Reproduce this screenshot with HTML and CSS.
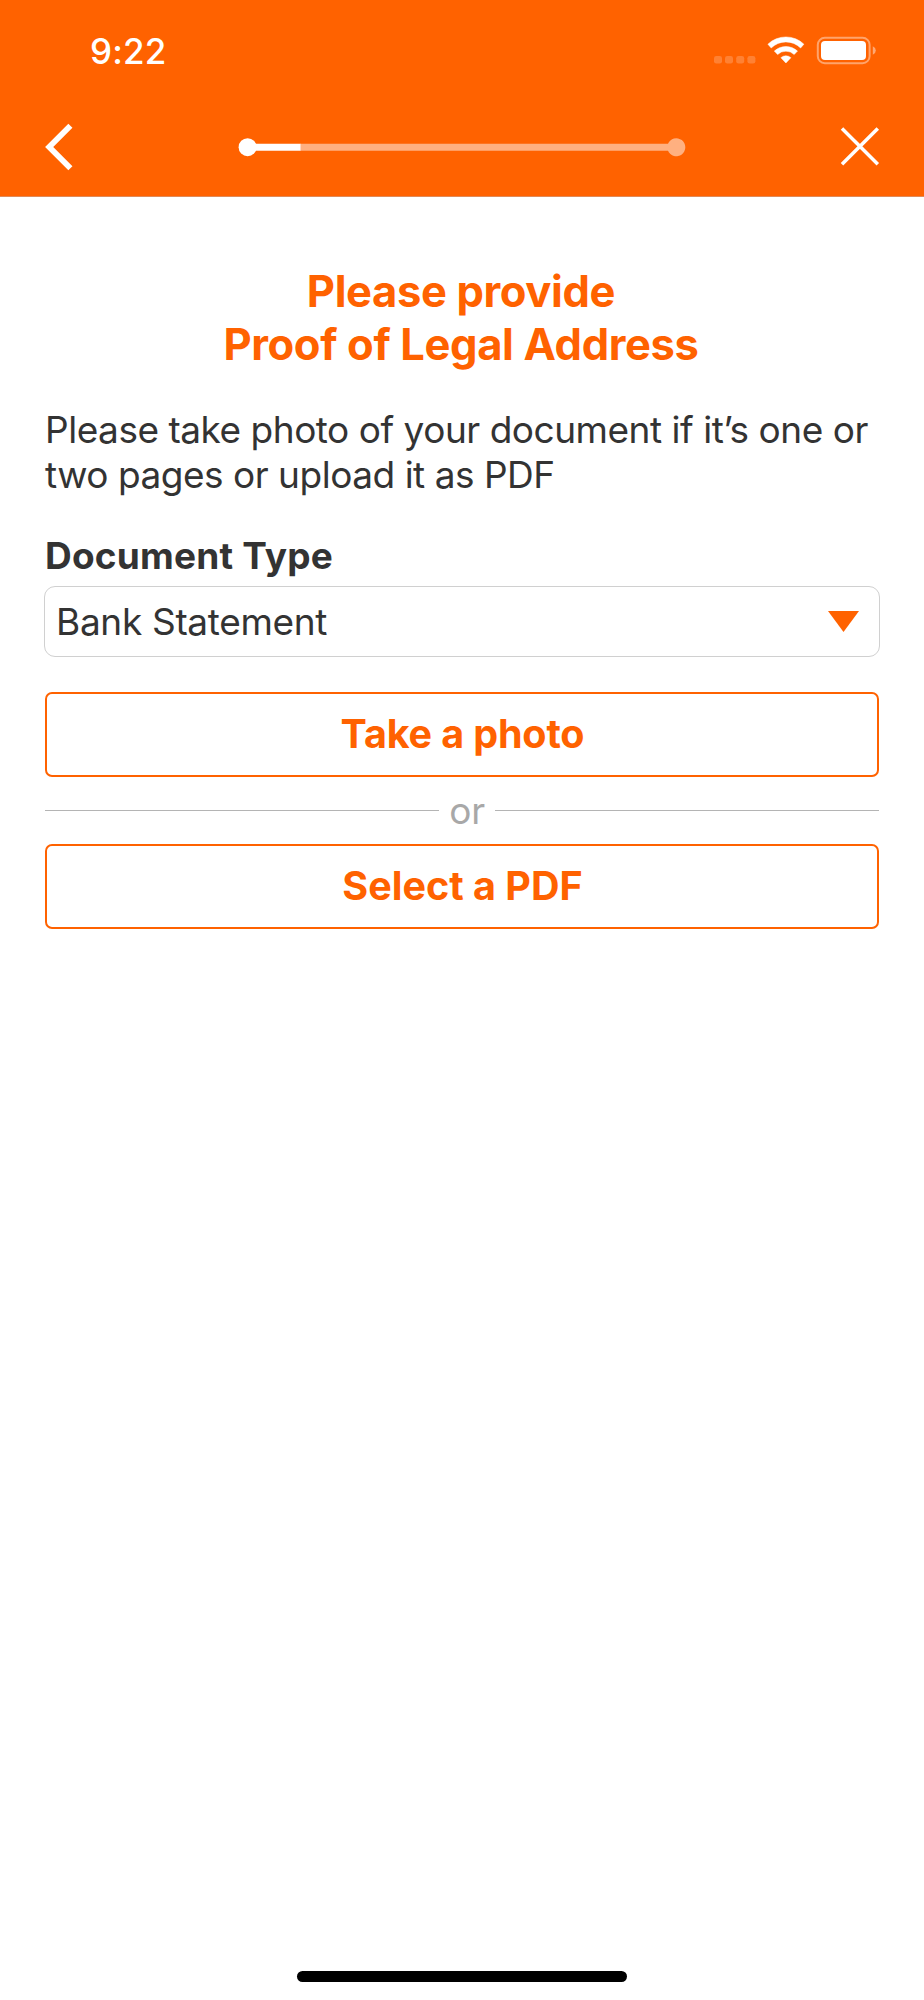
FILE: index.html
```html
<!DOCTYPE html>
<html lang="en">
<head>
<meta charset="utf-8">
<title>Proof of Legal Address</title>
<link rel="stylesheet" href="styles.css">
</head>
<body>
<div class="screen">
  <header class="header">
    <div class="status-bar">
      <span class="clock">9:22</span>
      <svg class="status-icons" width="164" height="30" viewBox="0 0 164 30">
        <g fill="#fff" fill-opacity=".2">
          <rect x="0" y="21" width="8" height="7.5" rx="2.3"/>
          <rect x="11" y="21" width="8" height="7.5" rx="2.3"/>
          <rect x="22.2" y="21" width="8" height="7.5" rx="2.3"/>
          <rect x="33.4" y="21" width="8" height="7.5" rx="2.3"/>
        </g>
        <g fill="#fff" stroke="#fff" stroke-width=".5" stroke-linejoin="round">
          <path d="M53.9 9.2A26 26 0 0 1 89.9 9.2L86.6 13A20.8 20.8 0 0 0 57.2 13Z"/>
          <path d="M60.3 16A17 17 0 0 1 83.5 16L80.2 19.5A12 12 0 0 0 63.6 19.5Z"/>
          <path d="M66.9 22.7A7.6 7.6 0 0 1 76.9 22.7L71.9 28Z"/>
        </g>
        <rect x="103.8" y="2.8" width="51.8" height="25.4" rx="7" fill="none" stroke="#fff" stroke-opacity=".42" stroke-width="2"/>
        <rect x="107" y="6" width="45" height="19.1" rx="4" fill="#fff"/>
        <path d="M158.8 11.2Q161.8 12.6 161.8 15.4T158.8 19.8Z" fill="#fff" fill-opacity=".45"/>
      </svg>
    </div>
    <nav class="nav-bar">
      <svg class="back" width="30" height="48" viewBox="0 0 30 48"><path d="M25.4 2.8 4.2 24 25.4 45.2" fill="none" stroke="#fff" stroke-width="5.8"/></svg>
      <svg class="progress" width="448" height="20" viewBox="0 0 448 20">
        <path d="M62 6.8H430A9 9 0 1 1 430 13.7H62Z" fill="#ffb080"/>
        <path d="M10 6.8H62.5V13.7H10Z" fill="#fff"/>
        <circle cx="9.6" cy="10.2" r="9" fill="#fff"/>
      </svg>
      <svg class="close" width="40" height="40" viewBox="0 0 40 40"><path d="M2 1.5 37.8 37.3M37.8 1.5 2 37.3" fill="none" stroke="#fff" stroke-width="3.5"/></svg>
    </nav>
  </header>
  <main class="content">
    <h1 class="title">Please provide<br>Proof of Legal Address</h1>
    <p class="intro">Please take photo of your document if it’s one or two pages or upload it as PDF</p>
    <div class="label">Document Type</div>
    <div class="select"><span class="select-value">Bank Statement</span><svg width="31" height="21" viewBox="0 0 31 21"><path d="M0 0H31L15.5 21Z" fill="#ff6200"/></svg></div>
    <button class="button button-photo">Take a photo</button>
    <div class="divider">or</div>
    <button class="button">Select a PDF</button>
  </main>
  <div class="home-indicator"></div>
</div>
</body>
</html>
```
FILE: styles.css
```css
* {
  box-sizing: border-box;
}

body {
  margin: 0;
  background: #fff;
  color: #333;
  font-family: Inter, "Liberation Sans", sans-serif;
}

.screen {
  display: flex;
  flex-direction: column;
  height: 2000px;
}

.header {
  height: 197px;
  background: #ff6200;
  border-bottom: 1px solid #e08a58;
}

.status-bar {
  display: flex;
  justify-content: space-between;
  align-items: flex-start;
  height: 96px;
  padding: 29px 46px 0 90px;
}

.clock {
  color: #fff;
  font-size: 35px;
  line-height: 44px;
  font-weight: 550;
  letter-spacing: 0.2px;
}

.status-icons {
  margin-top: 6px;
}

.nav-bar {
  display: flex;
  align-items: center;
  height: 102px;
  padding: 0 44px 0 45px;
}

.progress {
  margin-left: 163px;
}

.close {
  margin-left: auto;
}

.content {
  flex: 1;
  padding: 68px 45px 0;
}

.title {
  margin: 0;
  padding-right: 2px;
  color: #ff6200;
  font-size: 43.5px;
  line-height: 52.5px;
  font-weight: 700;
  letter-spacing: -0.36px;
  text-align: center;
}

.intro {
  margin: 37px 0 0;
  font-size: 37px;
  line-height: 45px;
  letter-spacing: -0.48px;
}

.label {
  margin-top: 36px;
  font-size: 37px;
  line-height: 46px;
  font-weight: 700;
  letter-spacing: 0.2px;
}

.select {
  display: flex;
  align-items: center;
  justify-content: space-between;
  height: 71px;
  margin: 7px -1px 0;
  padding: 0 20px 0 11px;
  border: 1px solid #d0d0d0;
  border-radius: 11px;
  font-size: 37px;
  letter-spacing: -0.32px;
}

.button {
  display: block;
  width: 100%;
  height: 85px;
  margin-top: 35px;
  padding: 0 0 2px 1px;
  border: 2px solid #ff6200;
  border-radius: 7px;
  background: #fff;
  color: #ff6200;
  font: 700 39.5px/48px Inter, "Liberation Sans", sans-serif;
}

.button-photo {
  letter-spacing: -0.15px;
}

.divider {
  display: flex;
  align-items: center;
  gap: 10px;
  height: 67px;
  color: #a8a8a8;
  font-size: 37px;
  letter-spacing: -0.4px;
}

.divider::before,
.divider::after {
  content: "";
  flex: 394;
  height: 1px;
  background: #b4b4b4;
}

.divider::after {
  flex: 384;
}

.divider + .button {
  margin-top: 0;
}

.home-indicator {
  width: 330px;
  height: 11px;
  margin: 0 auto 18px;
  border-radius: 6px;
  background: #000;
}
```
